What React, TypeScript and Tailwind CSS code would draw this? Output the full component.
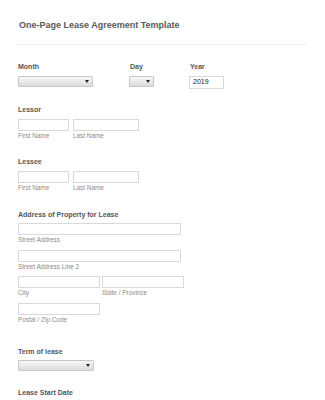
import React from "react";

const font = { fontFamily: '"Liberation Sans", Arial, sans-serif' };

function Label({ children, className = "" }: { children: React.ReactNode; className?: string }) {
  return (
    <div className={"text-[7px] leading-[8px] font-bold text-[#555] whitespace-nowrap " + className}>{children}</div>
  );
}

function Sub({ children, className = "" }: { children: React.ReactNode; className?: string }) {
  return <div className={"text-[6.4px] leading-[7px] text-[#8c8c8c] whitespace-nowrap " + className}>{children}</div>;
}

function Input({ w, children }: { w: string; children?: React.ReactNode }) {
  return (
    <div className={"h-[12px] border border-[#d9d9d9] bg-white flex items-center pl-[3px] text-[7px] text-[#222] " + w}>
      {children}
    </div>
  );
}

function Select({ w }: { w: string }) {
  return (
    <div
      className={
        "h-[11px] border border-[#c8c8c8] rounded-[1px] bg-gradient-to-b from-[#f7f7f7] to-[#dcdcdc] flex items-center justify-end pr-[3px] " +
        w
      }
    >
      <div className="w-0 h-0 border-l-[2px] border-r-[2px] border-t-[3px] border-l-transparent border-r-transparent border-t-[#222]" />
    </div>
  );
}

export default function App() {
  return (
    <div className="w-[325px] h-[400px] overflow-hidden bg-white pl-[18px] pr-[18px]" style={font}>
      <div className="pt-[20px] pl-[1px] text-[9px] leading-[11px] font-bold text-[#5a5a5a]">
        One-Page Lease Agreement Template
      </div>
      <div className="mt-[13px] h-px bg-[#efefef] w-[289px]" />

      {/* Date row */}
      <div className="mt-[18px] flex">
        <div className="w-[111px]">
          <Label>Month</Label>
          <div className="mt-[5px]">
            <Select w="w-[75px]" />
          </div>
        </div>
        <div className="w-[60px]">
          <Label className="pl-[1px]">Day</Label>
          <div className="mt-[5px]">
            <Select w="w-[25px]" />
          </div>
        </div>
        <div>
          <Label className="pl-[1px]">Year</Label>
          <div className="mt-[5px]">
            <Input w="w-[35px] h-[13px]">2019</Input>
          </div>
        </div>
      </div>

      {/* Lessor */}
      <div className="mt-[17px]">
        <Label>Lessor</Label>
        <div className="mt-[5px] flex gap-[4px]">
          <div>
            <Input w="w-[51px]" />
            <Sub className="mt-[1px]">First Name</Sub>
          </div>
          <div>
            <Input w="w-[66px]" />
            <Sub className="mt-[1px]">Last Name</Sub>
          </div>
        </div>
      </div>

      {/* Lessee */}
      <div className="mt-[19px]">
        <Label>Lessee</Label>
        <div className="mt-[5px] flex gap-[4px]">
          <div>
            <Input w="w-[51px]" />
            <Sub className="mt-[1px]">First Name</Sub>
          </div>
          <div>
            <Input w="w-[66px]" />
            <Sub className="mt-[1px]">Last Name</Sub>
          </div>
        </div>
      </div>

      {/* Address */}
      <div className="mt-[20px]">
        <Label>Address of Property for Lease</Label>
        <div className="mt-[4px]">
          <Input w="w-[163px]" />
          <Sub className="mt-[1px]">Street Address</Sub>
        </div>
        <div className="mt-[7px]">
          <Input w="w-[163px]" />
          <Sub className="mt-[1px]">Street Address Line 2</Sub>
        </div>
        <div className="mt-[6px] flex gap-[2px]">
          <div>
            <Input w="w-[82px]" />
            <Sub className="mt-[1px]">City</Sub>
          </div>
          <div>
            <Input w="w-[82px]" />
            <Sub className="mt-[1px]">State / Province</Sub>
          </div>
        </div>
        <div className="mt-[7px]">
          <Input w="w-[82px]" />
          <Sub className="mt-[1px]">Postal / Zip Code</Sub>
        </div>
      </div>

      {/* Term */}
      <div className="mt-[25px]">
        <Label>Term of lease</Label>
        <div className="mt-[4px]">
          <Select w="w-[76px]" />
        </div>
      </div>

      <div className="mt-[18px]">
        <Label>Lease Start Date</Label>
      </div>
    </div>
  );
}
